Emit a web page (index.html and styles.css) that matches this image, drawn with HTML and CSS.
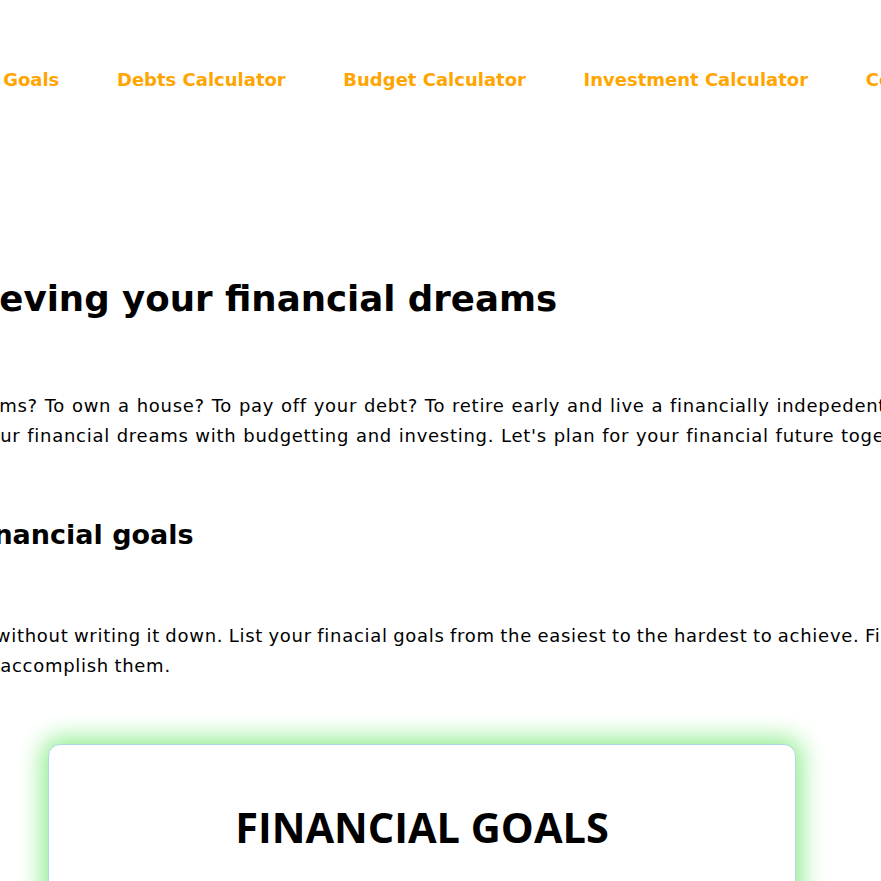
FILE: index.html
```html
<!DOCTYPE html>
<html lang="en">
<head>
<meta charset="utf-8">
<title>Financial Goals</title>
<link rel="stylesheet" href="styles.css">
</head>
<body>
<div class="page">
  <div class="content">
    <nav class="nav">
      <a class="nav-link" href="#">Home</a>
      <a class="nav-link" href="#">Financial Goals</a>
      <a class="nav-link" href="#">Debts Calculator</a>
      <a class="nav-link" href="#">Budget Calculator</a>
      <a class="nav-link" href="#">Investment Calculator</a>
      <a class="nav-link" href="#">Contact</a>
    </nav>

    <h1 class="title">Achieving your financial dreams</h1>

    <p class="intro">What are your dreams? To own a house? To pay off your debt? To retire early and live a financially indepedent<br>life? So, achieve your financial dreams with budgetting and investing. Let's plan for your financial future together.</p>

    <h2 class="subtitle">Setting financial goals</h2>

    <p class="goals-text">A goal without writing it down. List your finacial goals from the easiest to the hardest to achieve. Find out<br>how to accomplish them.</p>

    <section class="card">
      <h2 class="card-title">FINANCIAL GOALS</h2>
      <div class="card-body"></div>
    </section>
  </div>
</div>
</body>
</html>
```

FILE: styles.css
```css
html, body {
  margin: 0;
  padding: 0;
  overflow: hidden;
  background: #ffffff;
}

body {
  font-family: "DejaVu Sans", Verdana, sans-serif;
  font-size: 18px;
  color: #000000;
}

.page {
  display: flex;
  justify-content: center;
  width: 881px;
}

.content {
  flex: 0 0 1302px;
  width: 1302px;
  padding-top: 69px;
}

.nav {
  display: flex;
  gap: 57.6px;
  white-space: nowrap;
  line-height: 21px;
}

.nav-link {
  color: #ffa500;
  font-weight: bold;
  font-size: 18px;
  text-decoration: none;
}

.title {
  margin: 188px 0 0 123.7px;
  font-size: 35.6px;
  line-height: 42px;
  font-weight: bold;
  white-space: nowrap;
}

.intro {
  margin: 71px 0 0 21px;
  line-height: 30px;
  letter-spacing: 0.72px;
  word-spacing: 0.4px;
  white-space: nowrap;
}

.subtitle {
  margin: 67.5px 0 0 63.1px;
  font-size: 27px;
  line-height: 32px;
  font-weight: bold;
  white-space: nowrap;
}

.goals-text {
  margin: 70.5px 0 0 141px;
  line-height: 30px;
  letter-spacing: 0.72px;
  word-spacing: -1px;
  white-space: nowrap;
}

.card {
  box-sizing: border-box;
  width: 748px;
  margin: 63px 0 0 258.5px;
  padding: 54px 20px 40px;
  border: 1px solid #add8e6;
  border-radius: 12px;
  background: #ffffff;
  box-shadow: 0 0 25px 6px #90ee90;
}

.card-title {
  margin: 0;
  text-align: center;
  font-family: "Open Sans", "DejaVu Sans", sans-serif;
  font-size: 41.5px;
  font-weight: 700;
}

.card-body {
  height: 300px;
}
```
